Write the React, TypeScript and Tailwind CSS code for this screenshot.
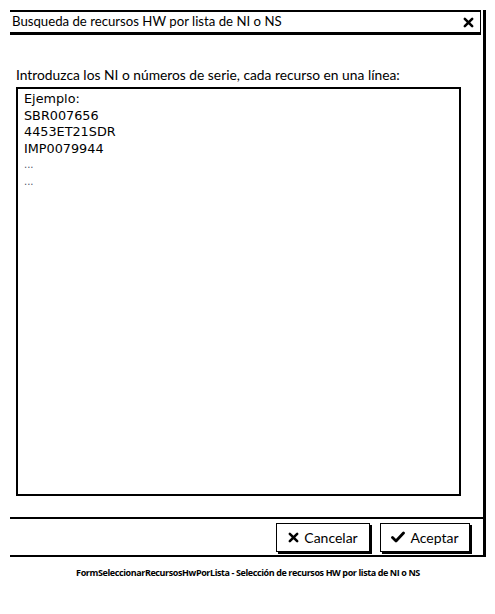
const XIcon = ({ className }: { className?: string }) => (
  <svg viewBox="0 0 12 12" className={className}>
    <path d="M2 2 L10 10 M10 2 L2 10" stroke="black" strokeWidth="2.8" strokeLinecap="round" />
  </svg>
);

const CheckIcon = ({ className }: { className?: string }) => (
  <svg viewBox="0 0 14 12" className={className}>
    <path d="M1.5 6.5 L5 10 L12.5 2" stroke="black" strokeWidth="2.8" fill="none" strokeLinecap="round" strokeLinejoin="round" />
  </svg>
);

const sketch = { fontFamily: "Lato, 'Open Sans', sans-serif" };

export default function App() {
  const lines = ["Ejemplo:", "SBR007656", "4453ET21SDR", "IMP0079944", "...", "..."];

  return (
    <div className="h-[614px] w-[495px] bg-white pt-[10px] pl-[10px]" style={sketch}>
      {/* window */}
      <div className="flex h-[547px] w-[476px] flex-col border-r-[3px] border-black">
        {/* title bar */}
        <div className="mr-[2px] flex h-[25px] items-center justify-between border-t-2 border-b-[3px] border-r border-black pl-[2px] pr-[6px]">
          <span className="text-[13.2px] text-black">Busqueda de recursos HW por lista de NI o NS</span>
          <XIcon className="h-[11px] w-[11px]" />
        </div>

        {/* body */}
        <div className="flex flex-1 flex-col pl-[6px] pt-[31px]">
          <p className="text-[13.8px] leading-[17px] text-black">
            Introduzca los NI o números de serie, cada recurso en una línea:
          </p>
          <div
            className="mt-[4px] h-[409px] w-[445px] border-2 border-black px-[6px] pt-[2px] text-[12.8px] leading-[16.5px] text-black"
            style={{ fontFamily: "'DejaVu Sans', sans-serif" }}
          >
            {lines.map((l, i) => (
              <div key={i} className={l === "..." ? "text-[10px] text-gray-600" : ""}>
                {l}
              </div>
            ))}
          </div>
        </div>

        {/* footer */}
        <div className="mt-auto flex h-[40px] items-center justify-end gap-[10px] border-t-2 border-b-2 border-black pr-[13px]">
          <button className="flex h-[29px] w-[94px] items-center justify-center gap-[5px] border border-black text-[14px] text-black shadow-[2px_2px_0_#000]">
            <XIcon className="h-[11px] w-[11px]" />
            Cancelar
          </button>
          <button className="flex h-[29px] w-[90px] items-center justify-center gap-[5px] border border-black text-[14px] text-black shadow-[2px_2px_0_#000]">
            <CheckIcon className="h-[12px] w-[14px]" />
            Aceptar
          </button>
        </div>
      </div>

      <p
        className="mt-[9px] w-[476px] text-center text-[9px] font-bold text-black"
        style={{ fontFamily: "'Open Sans', sans-serif", letterSpacing: "-0.4px" }}
      >
        FormSeleccionarRecursosHwPorLista - Selección de recursos HW por lista de NI o NS
      </p>
    </div>
  );
}
